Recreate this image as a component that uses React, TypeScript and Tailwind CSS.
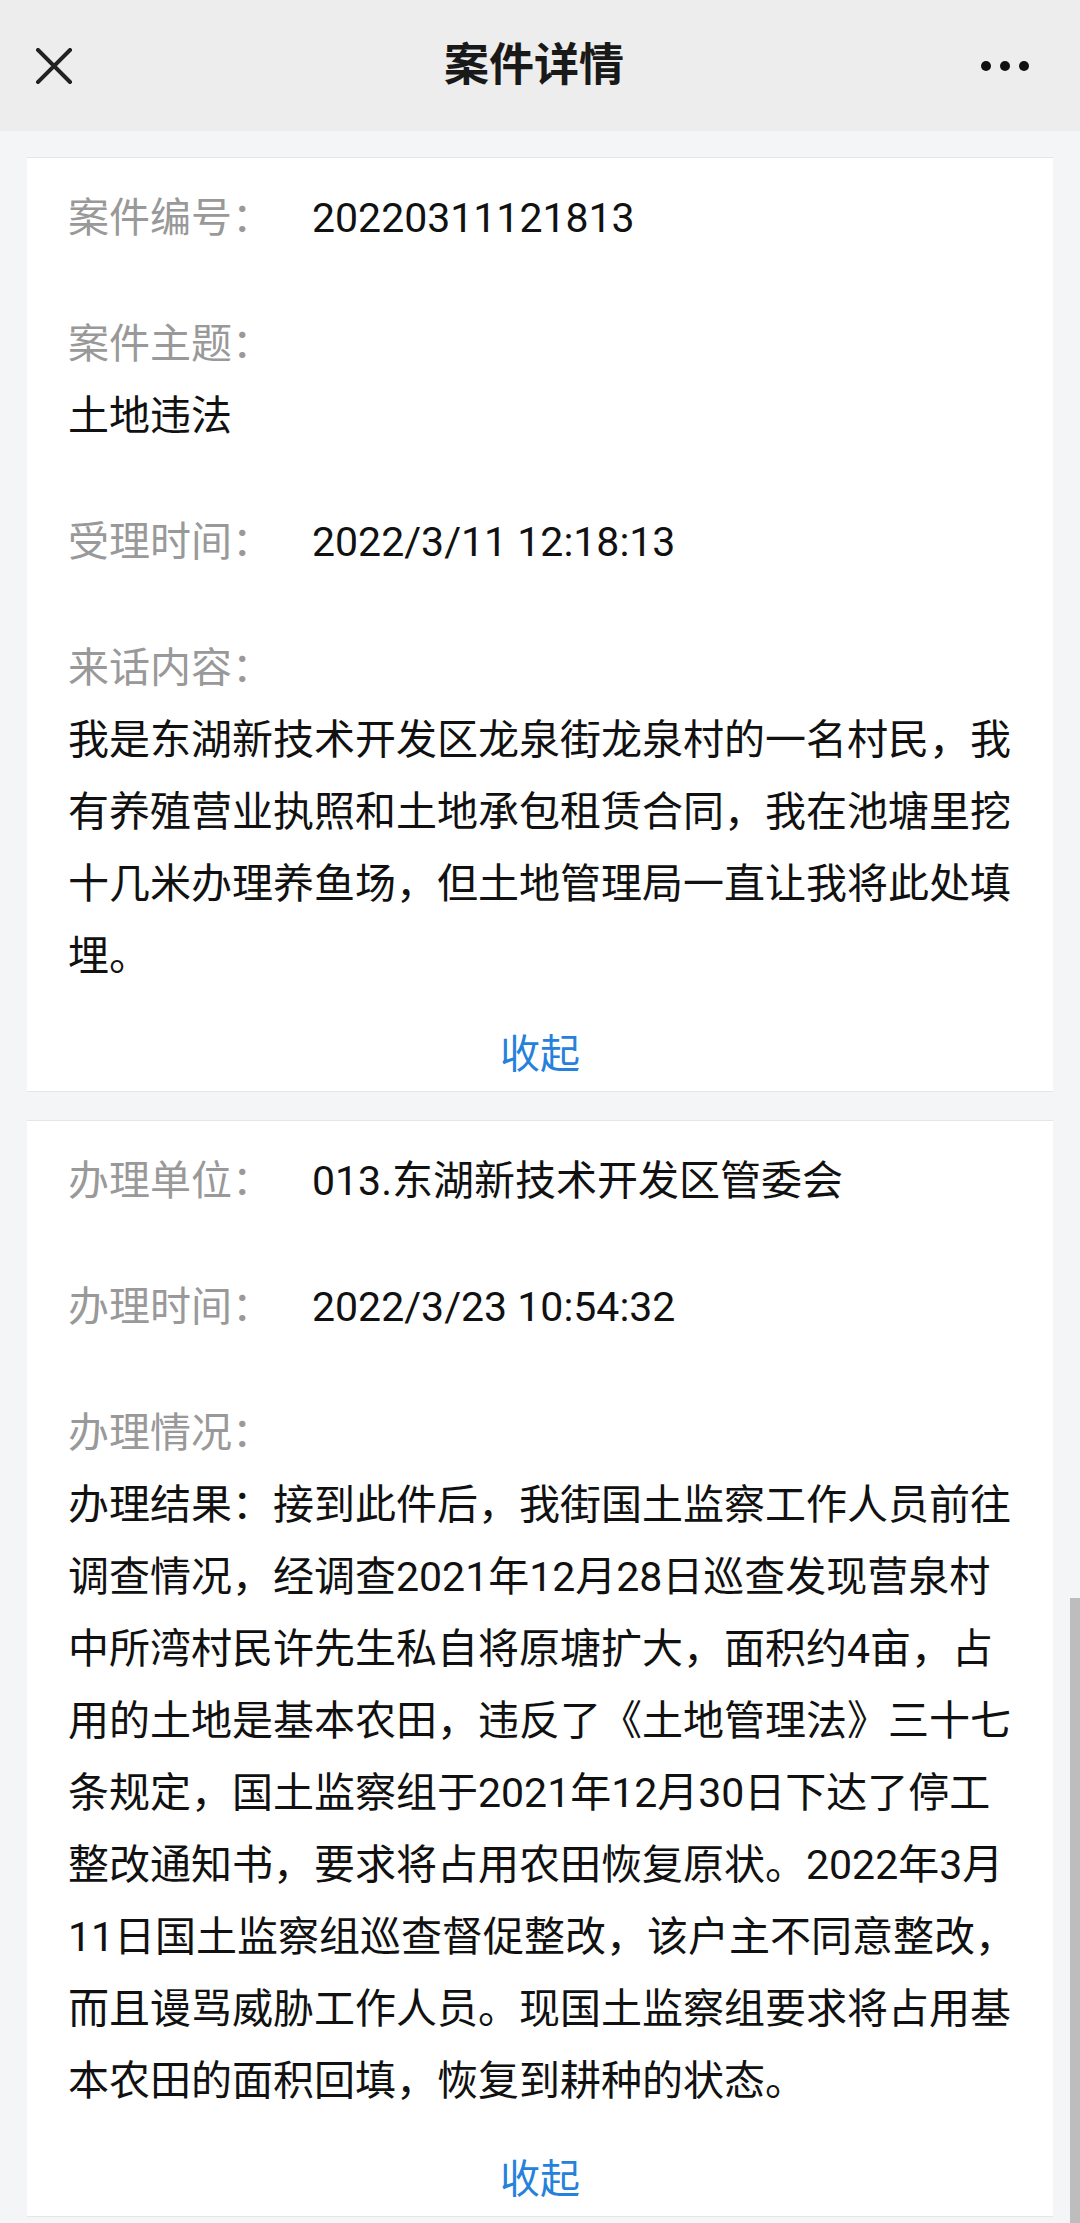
import React from 'react'

const font = { fontFamily: 'Roboto, "Noto Sans CJK SC", sans-serif' }

type Field = { label: string; value?: string; lines?: string[] }

const caseInfo: Field[] = [
  { label: '案件编号：', value: '20220311121813' },
  { label: '案件主题：', lines: ['土地违法'] },
  { label: '受理时间：', value: '2022/3/11 12:18:13' },
  {
    label: '来话内容：',
    lines: [
      '我是东湖新技术开发区龙泉街龙泉村的一名村民，我',
      '有养殖营业执照和土地承包租赁合同，我在池塘里挖',
      '十几米办理养鱼场，但土地管理局一直让我将此处填',
      '埋。',
    ],
  },
]

const handleInfo: Field[] = [
  { label: '办理单位：', value: '013.东湖新技术开发区管委会' },
  { label: '办理时间：', value: '2022/3/23 10:54:32' },
  {
    label: '办理情况：',
    lines: [
      '办理结果：接到此件后，我街国土监察工作人员前往',
      '调查情况，经调查2021年12月28日巡查发现营泉村',
      '中所湾村民许先生私自将原塘扩大，面积约4亩，占',
      '用的土地是基本农田，违反了《土地管理法》三十七',
      '条规定，国土监察组于2021年12月30日下达了停工',
      '整改通知书，要求将占用农田恢复原状。2022年3月',
      '11日国土监察组巡查督促整改，该户主不同意整改，',
      '而且谩骂威胁工作人员。现国土监察组要求将占用基',
      '本农田的面积回填，恢复到耕种的状态。',
    ],
  },
]

function FieldRow({ f }: { f: Field }) {
  if (f.value !== undefined) {
    return (
      <div className="flex whitespace-nowrap">
        <span className="w-[244px] shrink-0 text-[#999999]">{f.label}</span>
        <span className="text-[#111111]">{f.value}</span>
      </div>
    )
  }
  return (
    <div>
      <div className="text-[#999999]">{f.label}</div>
      {f.lines?.map((l, i) => (
        <div key={i} className="whitespace-nowrap text-[#111111]">
          {l}
        </div>
      ))}
    </div>
  )
}

function Card({ fields }: { fields: Field[] }) {
  return (
    <section className="bg-white border-y border-[#e6e6e6] px-[41px] pt-[24px]">
      <div className="flex flex-col gap-[54px]">
        {fields.map((f, i) => (
          <FieldRow key={i} f={f} />
        ))}
      </div>
      <button className="mt-[27px] block w-full h-[72px] text-center text-[40px] text-[#2681db]">
        收起
      </button>
    </section>
  )
}

export default function App() {
  return (
    <div className="relative min-h-[2223px] bg-[#f4f5f6] overflow-hidden" style={font}>
      <header className="h-[131px] bg-[#ededed] grid grid-cols-[1fr_auto_1fr] items-center">
        <div className="pl-[36px]">
          <svg width="36" height="36" viewBox="0 0 36 36" fill="none">
            <path d="M2 2 L34 34 M34 2 L2 34" stroke="#222222" strokeWidth="4" strokeLinecap="square" />
          </svg>
        </div>
        <h1 className="text-[45px] font-bold text-[#191919] leading-none pr-[12px]">案件详情</h1>
        <div className="flex justify-end gap-[9px] pr-[51px]">
          <span className="w-[10px] h-[10px] rounded-full bg-[#111111]" />
          <span className="w-[10px] h-[10px] rounded-full bg-[#111111]" />
          <span className="w-[10px] h-[10px] rounded-full bg-[#111111]" />
        </div>
      </header>

      <main className="px-[27px] pt-[26px] pb-[8px] flex flex-col gap-[28px] text-[41px] leading-[72px]">
        <Card fields={caseInfo} />
        <Card fields={handleInfo} />
      </main>

      <div className="absolute right-0 top-[1598px] w-[10px] h-[625px] bg-[#bdbdbd]" />
    </div>
  )
}
